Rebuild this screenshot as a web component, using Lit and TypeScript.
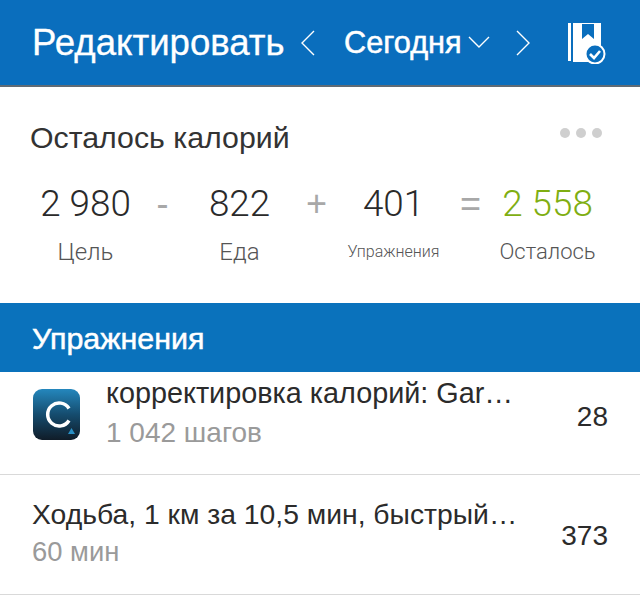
import {LitElement, css, html, svg} from 'lit';
import {customElement} from 'lit/decorators.js';

const chevron = (d: string, w: number, h: number) => html`<svg width=${w} height=${h} viewBox="0 0 ${w} ${h}">
  ${svg`<path d=${d} fill="none" stroke="#fff" stroke-width="1.4"/>`}
</svg>`;

@customElement('app-root')
export class AppRoot extends LitElement {
  static styles = css`
    :host {
      display: block;
      width: 640px;
      height: 598px;
      overflow: hidden;
      background: #fff;
      font-family: 'Liberation Sans', Arial, sans-serif;
      color: #333;
    }
    .header {
      height: 85px;
      box-sizing: content-box;
      border-bottom: 2px solid #5f6b75;
      background: #0a6ebd;
      color: #fff;
      display: flex;
      align-items: center;
      padding-left: 32px;
    }
    .edit {
      font-size: 36.6px;
      width: 268px;
      white-space: nowrap;
      -webkit-text-stroke: 0.3px #fff;
    }
    .today {
      font-size: 30.7px;
      margin-left: 28px;
      -webkit-text-stroke: 0.5px #fff;
    }
    .down {
      display: flex;
      margin-left: 6px;
      margin-right: 25px;
    }
    .book {
      margin-left: 37px;
    }
    .card {
      height: 216px;
      box-sizing: border-box;
      padding-top: 36px;
    }
    .title-row {
      display: flex;
      align-items: center;
      justify-content: space-between;
      padding: 0 38px 0 30px;
      font-size: 30.3px;
      line-height: 30px;
    }
    .dots {
      display: flex;
      gap: 6px;
      margin-bottom: 10px;
    }
    .dots span {
      width: 10px;
      height: 10px;
      border-radius: 50%;
      background: #cfcfcf;
    }
    .sums {
      display: grid;
      grid-template-columns: repeat(7, 77px);
      padding: 31px 0 0 47px;
      text-align: center;
    }
    .num {
      font-family: Roboto, 'Liberation Sans', sans-serif;
      font-weight: 300;
      font-size: 36.8px;
      line-height: 40px;
      white-space: nowrap;
      justify-self: center;
      color: #2a2a2a;
    }
    .op {
      font-size: 36px;
      line-height: 40px;
      color: #a8a8a8;
    }
    .num.green {
      color: #7fae12;
    }
    .lbl {
      font-family: Roboto, 'Liberation Sans', sans-serif;
      font-weight: 300;
      font-size: 24px;
      line-height: 28px;
      color: #555;
      margin-top: 14px;
      white-space: nowrap;
      justify-self: center;
    }
    .lbl.small {
      font-size: 16px;
    }
    .lbl.rest {
      font-size: 22px;
    }
    .band {
      height: 69px;
      box-sizing: border-box;
      background: #0a72bc;
      color: #fff;
      font-size: 30.4px;
      padding: 19px 0 0 32px;
      line-height: 32px;
      -webkit-text-stroke: 0.5px #fff;
    }
    .row {
      display: flex;
      align-items: center;
      border-bottom: 1px solid #d9d9d9;
      padding: 0 32px;
    }
    .row.one {
      height: 103px;
      padding-bottom: 20px;
      box-sizing: border-box;
    }
    .row.two {
      height: 120px;
      padding-bottom: 3px;
      box-sizing: border-box;
    }
    .logo {
      width: 47px;
      height: 51px;
      margin: 2px 26px 0 1px;
      flex: none;
    }
    .body {
      flex: 1;
      min-width: 0;
    }
    .name {
      font-size: 28.8px;
      line-height: 32px;
      white-space: nowrap;
      color: #2b2b2b;
    }
    .sub {
      font-size: 28px;
      line-height: 32px;
      color: #9a9a9a;
      margin-top: 8px;
    }
    .row.two .name {
      font-size: 28.3px;
    }
    .row.two .sub {
      font-size: 27.4px;
      margin-top: 6px;
    }
    .cal {
      font-size: 28px;
      color: #2b2b2b;
      margin-top: 8px;
    }
    .row.two .cal {
      margin-top: 6px;
    }
  `;

  render() {
    return html`
      <div class="header">
        <div class="edit">Редактировать</div>
        ${chevron('M14 2 L2 14 L14 26', 16, 28)}
        <div class="today">Сегодня</div>
        <span class="down">${chevron('M1 1 L11 11 L21 1', 22, 13)}</span>
        ${chevron('M2 2 L14 14 L2 26', 16, 28)}
        <svg class="book" width="38" height="42" viewBox="0 0 38 42">
          <path d="M0 1h3v38H0z M5 1h28v28a11 11 0 0 0-11 11H5z" fill="#fff"/>
          <path d="M14 2h12v15l-6-5-6 5z" fill="#0a6ebd"/>
          <circle cx="27" cy="32" r="9.500" fill="#0a6ebd" stroke="#fff" stroke-width="2"/>
          <path d="M22 32l4 4 6-7" fill="none" stroke="#fff" stroke-width="2.600"/>
        </svg>
      </div>
      <div class="card">
        <div class="title-row">
          <span>Осталось калорий</span>
          <span class="dots"><span></span><span></span><span></span></span>
        </div>
        <div class="sums">
          <div class="num">2 980</div>
          <div class="op">-</div>
          <div class="num">822</div>
          <div class="op">+</div>
          <div class="num">401</div>
          <div class="op">=</div>
          <div class="num green">2 558</div>
          <div class="lbl">Цель</div>
          <div></div>
          <div class="lbl">Еда</div>
          <div></div>
          <div class="lbl small">Упражнения</div>
          <div></div>
          <div class="lbl rest">Осталось</div>
        </div>
      </div>
      <div class="band">Упражнения</div>
      <div class="row one">
        <svg class="logo" viewBox="0 0 47 51">
          <defs>
            <linearGradient id="g" x1="0" y1="0" x2="0" y2="1">
              <stop offset="0" stop-color="#2487bd"/>
              <stop offset="0.5" stop-color="#154c6e"/>
              <stop offset="1" stop-color="#101c28"/>
            </linearGradient>
          </defs>
          <rect width="47" height="51" rx="9" fill="url(#g)"/>
          <path d="M36 19.500A11.500 11.500 0 1 0 36 31.500" fill="none" stroke="#fff" stroke-width="3.500"/>
          <path d="M38.500 39l3.500 6h-7z" fill="#2a8fc4"/>
        </svg>
        <div class="body">
          <div class="name">корректировка калорий: Gar…</div>
          <div class="sub">1 042 шагов</div>
        </div>
        <div class="cal">28</div>
      </div>
      <div class="row two">
        <div class="body">
          <div class="name">Ходьба, 1 км за 10,5 мин, быстрый…</div>
          <div class="sub">60 мин</div>
        </div>
        <div class="cal">373</div>
      </div>
    `;
  }
}
